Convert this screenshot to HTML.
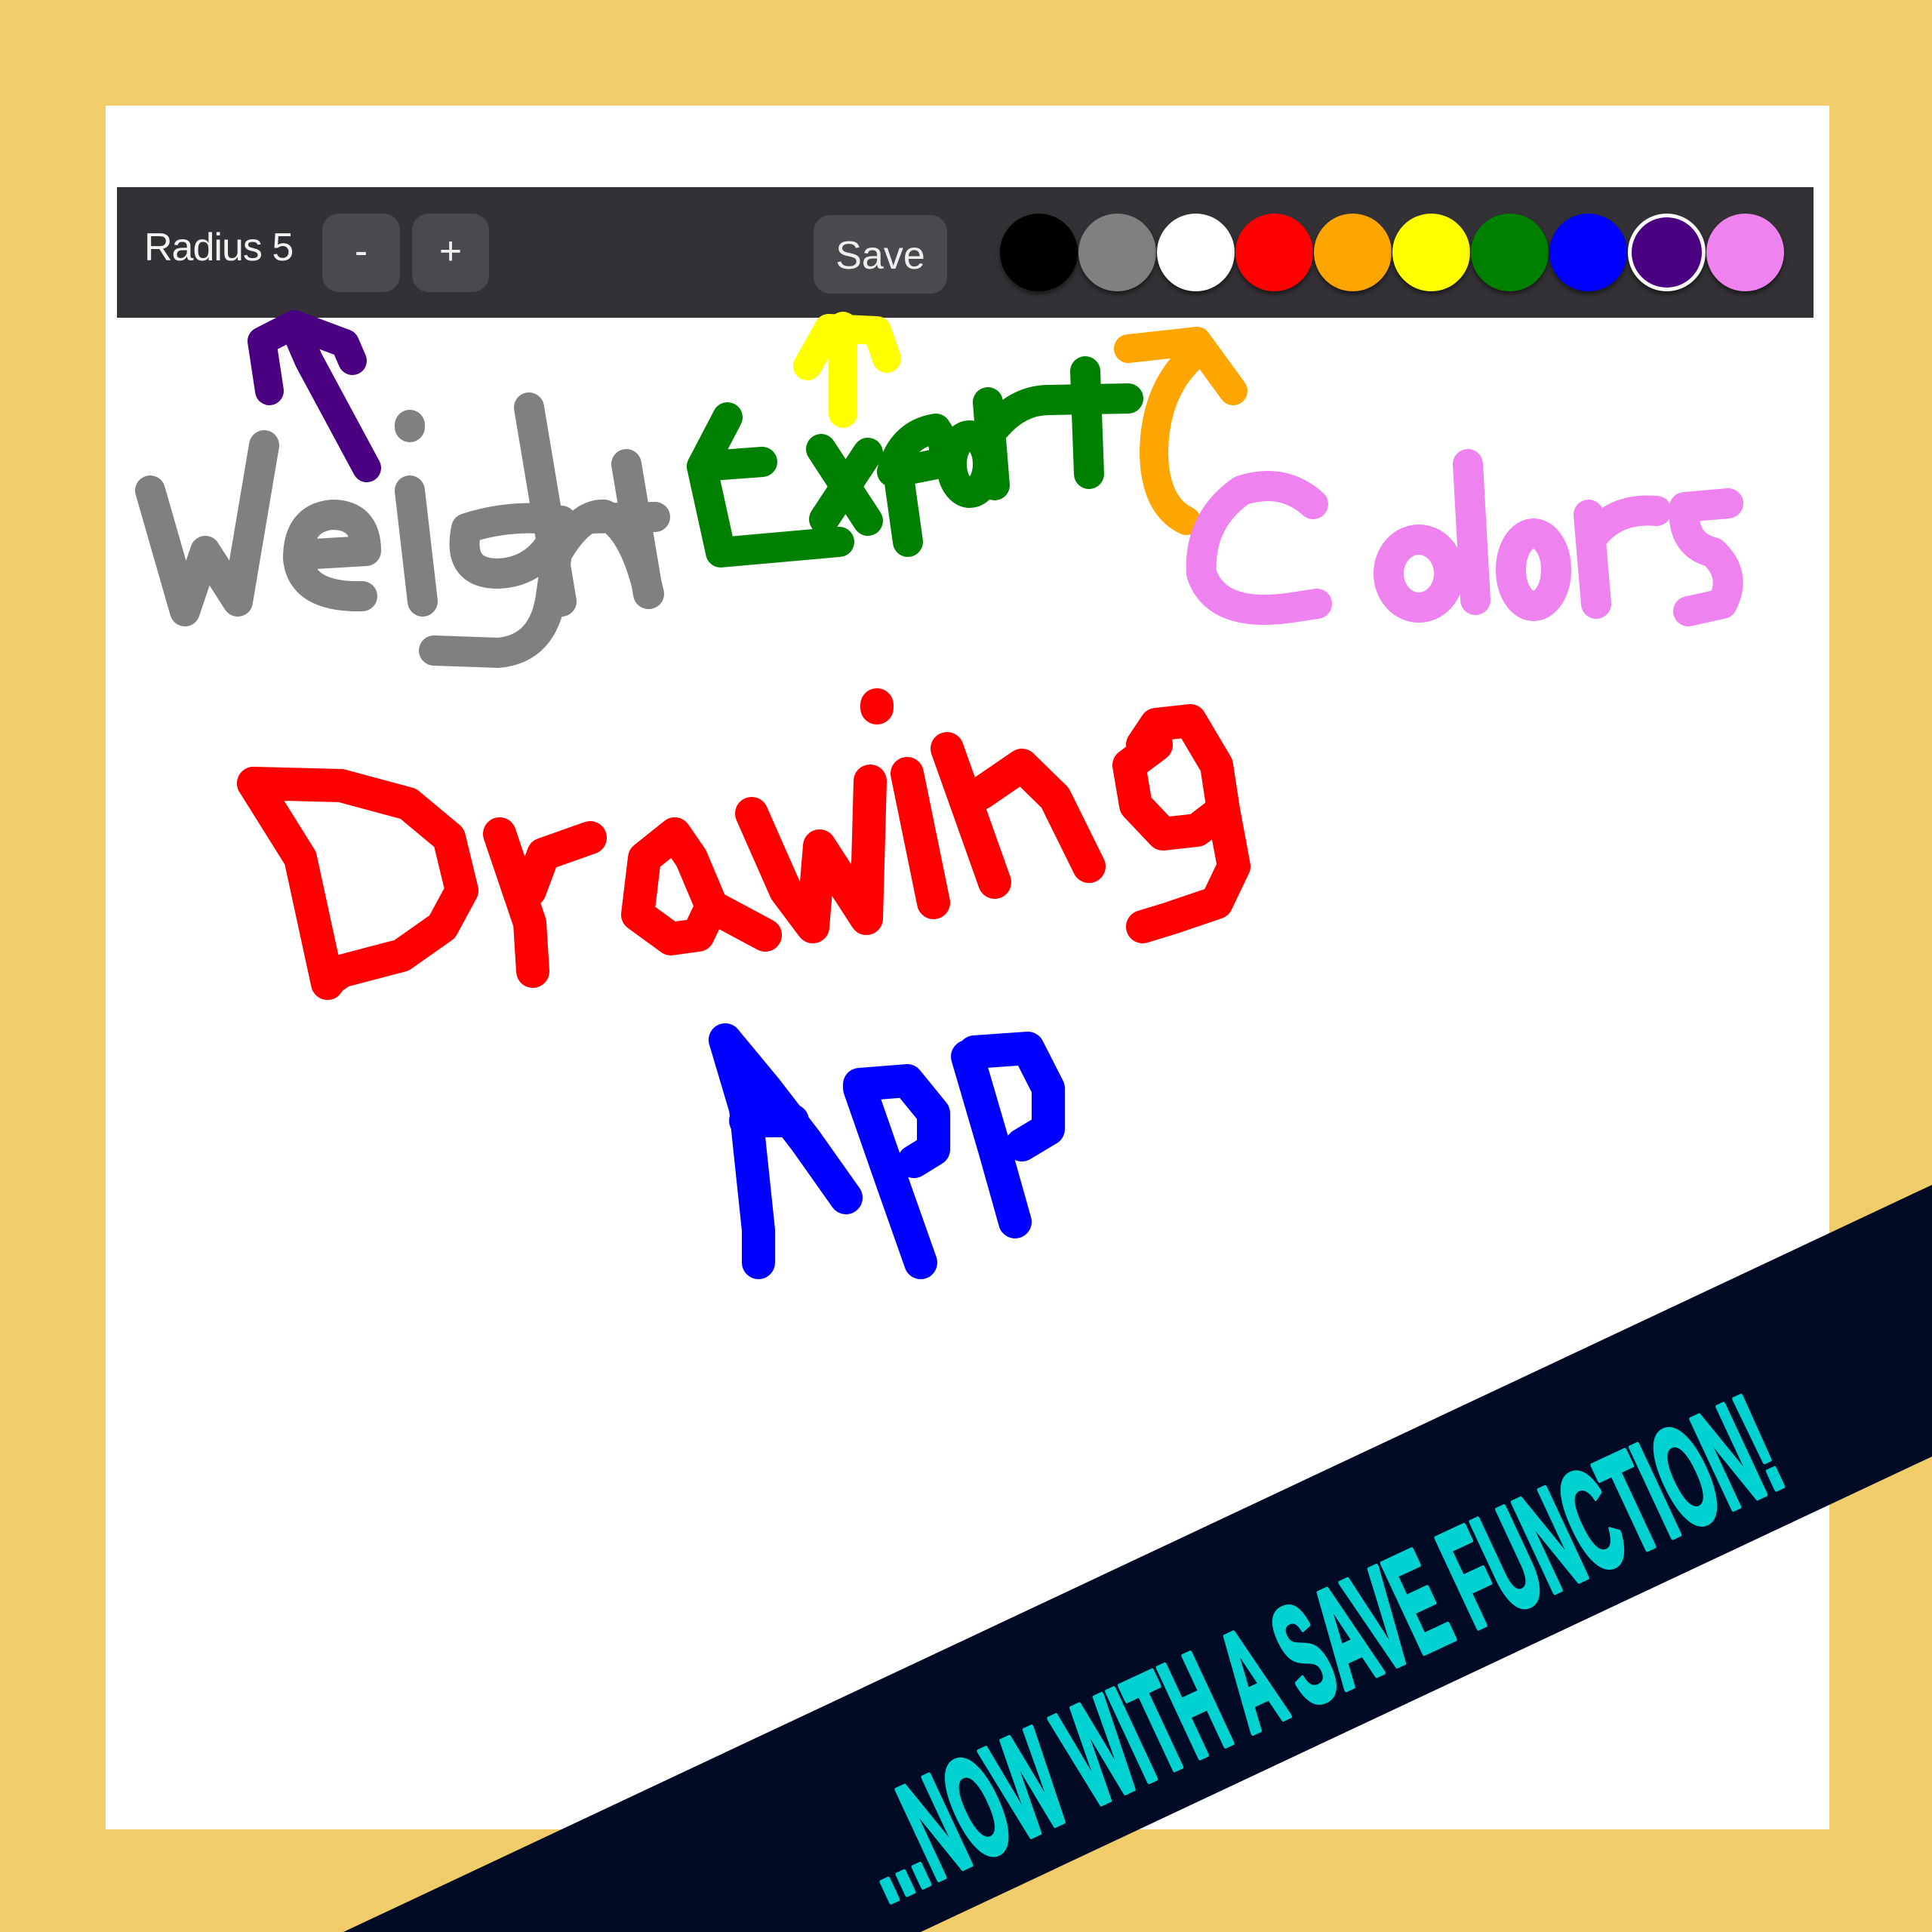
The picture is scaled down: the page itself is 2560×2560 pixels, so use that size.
<!DOCTYPE html>
<html><head><meta charset="utf-8"><style>
html,body{margin:0;padding:0;}
body{width:2560px;height:2560px;background:#f0cd6a;position:relative;overflow:hidden;font-family:"Liberation Sans",sans-serif;}
.panel{position:absolute;left:140px;top:140px;width:2284px;height:2284px;background:#fff;}
.bar{position:absolute;left:155px;top:248px;width:2248px;height:173px;background:#333135;}
.lbl{position:absolute;left:191px;top:298px;font-size:52px;color:#f2f2f2;letter-spacing:-1px;}
.btn{position:absolute;top:283px;height:104px;background:#4a494d;border-radius:22px;color:#eee;font-size:52px;text-align:center;line-height:100px;}
.dot{position:absolute;top:283px;width:103px;height:103px;border-radius:50%;box-shadow:0 4px 6px rgba(0,0,0,.5);box-sizing:border-box;}
svg{position:absolute;left:0;top:0;}
</style></head><body>
<div class="panel"></div>
<div class="bar"></div>
<div class="lbl">Radius 5</div>
<div class="btn" style="left:427px;width:103px;">-</div>
<div class="btn" style="left:546px;width:102px;">+</div>
<div class="btn" style="left:1078px;width:177px;top:285px;line-height:108px;">Save</div>
<div class="dot" style="left:1325px;background:#000"></div>
<div class="dot" style="left:1429px;background:#808080"></div>
<div class="dot" style="left:1533px;background:#fff"></div>
<div class="dot" style="left:1637px;background:#f00"></div>
<div class="dot" style="left:1741px;background:#ffa500"></div>
<div class="dot" style="left:1845px;background:#ff0"></div>
<div class="dot" style="left:1949px;background:#008000"></div>
<div class="dot" style="left:2053px;background:#00f"></div>
<div class="dot" style="left:2157px;background:#4b0082;border:5px solid #fff"></div>
<div class="dot" style="left:2261px;background:#ee82ee"></div>
<svg width="2560" height="2560" viewBox="0 0 2560 2560" fill="none" stroke-linecap="round" stroke-linejoin="round">
<g stroke="#808080" stroke-width="40">
<path d="M199,650 L245,810 L272,730 L315,797 L350,590"/>
<path d="M400,735 L485,730 Q485,682 440,682 Q395,686 395,740 Q400,792 480,790"/>
<path d="M543,563 L543,566"/>
<path d="M543,650 L560,797"/>
<path d="M744,690 Q680,680 618,700 Q605,760 660,760 Q720,758 744,690 L730,790 Q720,860 660,865 L575,862"/>
<path d="M701,540 L744,797"/>
<path d="M740,730 Q770,680 801,682 Q840,700 860,787"/>
<path d="M830,615 L859,787"/>
<path d="M782,687 L868,685"/>
</g>
<g stroke="#4b0082" stroke-width="38">
<path d="M486,620 L409,477 L390,433"/>
<path d="M357,518 L347,452 L390,430 L457,455 L467,478"/>
</g>
<g stroke="#ffff00" stroke-width="38">
<path d="M1117,548 L1117,432"/>
<path d="M1070,485 L1098,435 L1162,438 L1175,475"/>
</g>
<g stroke="#008000" stroke-width="40">
<path d="M964,553 L930,618 L1010,612"/>
<path d="M930,618 L955,732 L1112,718"/>
<path d="M1088,595 L1150,690"/>
<path d="M1150,600 L1092,688"/>
<path d="M1182,625 Q1195,575 1240,568 Q1262,600 1240,615 L1190,625 L1203,718"/>
<ellipse cx="1285" cy="615" rx="24" ry="38"/>
<path d="M1309,533 L1318,643"/>
<path d="M1320,565 Q1350,530 1390,530 L1495,528"/>
<path d="M1438,492 L1443,628"/>
</g>
<g stroke="#ffa500" stroke-width="38">
<path d="M1572,690 Q1530,670 1529,600 Q1530,520 1577,475"/>
<path d="M1495,462 L1586,452 L1634,518"/>
</g>
<g stroke="#ee82ee" stroke-width="40">
<path d="M1740,668 Q1700,632 1645,650 Q1588,690 1592,760 Q1612,820 1712,805 L1745,800"/>
<ellipse cx="1880" cy="760" rx="40" ry="45"/>
<path d="M1945,615 L1955,795"/>
<ellipse cx="2032" cy="755" rx="30" ry="48"/>
<path d="M2105,682 L2115,800"/>
<path d="M2110,712 Q2140,672 2195,677"/>
<path d="M2290,667 L2232,672 Q2228,722 2270,732 Q2302,762 2282,800 L2237,810"/>
</g>
<g stroke="#ff0000" stroke-width="44">
<path d="M336,1038 L398,1137 L434,1303"/>
<path d="M336,1038 L452,1041 L541,1065 L595,1110 L612,1180 L586,1228 L532,1266 L452,1287 L434,1300"/>
<path d="M662,1105 L702,1223 L706,1287"/>
<path d="M702,1180 L720,1132 L782,1110"/>
<path d="M894,1105 L854,1137 L845,1212 L889,1244 L925,1239 L943,1201 L916,1137 L894,1105"/>
<path d="M943,1201 L1014,1239"/>
<path d="M996,1078 L1041,1180 L1077,1228 L1086,1121 L1148,1217 L1153,1035"/>
<path d="M1162,934 L1162,938"/>
<path d="M1202,1025 L1237,1196"/>
<path d="M1255,992 L1318,1169"/>
<path d="M1300,1051 L1354,1014 L1398,1057 L1443,1148"/>
<path d="M1532,987 L1496,1014 L1505,1067 L1541,1105 L1586,1100 L1621,1073 L1612,1014 L1577,955 L1532,960 L1514,987"/>
<path d="M1621,1073 L1635,1148 L1612,1196 L1550,1217 L1514,1228"/>
</g>
<g stroke="#0000ff" stroke-width="44">
<path d="M961,1378 L988,1469 L1005,1630 L1005,1673"/>
<path d="M961,1378 L1014,1442 L1068,1512 L1121,1587"/>
<path d="M988,1485 L1050,1485"/>
<path d="M1139,1442 L1184,1571 L1220,1673"/>
<path d="M1139,1437 L1202,1432 L1237,1475 L1237,1523 L1211,1539"/>
<path d="M1282,1400 L1318,1523 L1345,1619"/>
<path d="M1291,1394 L1362,1389 L1389,1442 L1389,1496 L1354,1517"/>
</g>
<polygon points="455,2560 2560,1570 2560,1930 1220,2560" fill="#020b26" stroke="none"/>
<text x="0" y="0" transform="translate(1745,2185) rotate(-25)" text-anchor="middle" dominant-baseline="central" fill="#00d2d2" stroke="#00d2d2" stroke-width="7" font-family="'Liberation Sans Narrow','Liberation Sans',sans-serif" font-weight="bold" font-size="190" textLength="1320" lengthAdjust="spacingAndGlyphs">...NOW WITH A SAVE FUNCTION!</text>
</svg>
</body></html>
